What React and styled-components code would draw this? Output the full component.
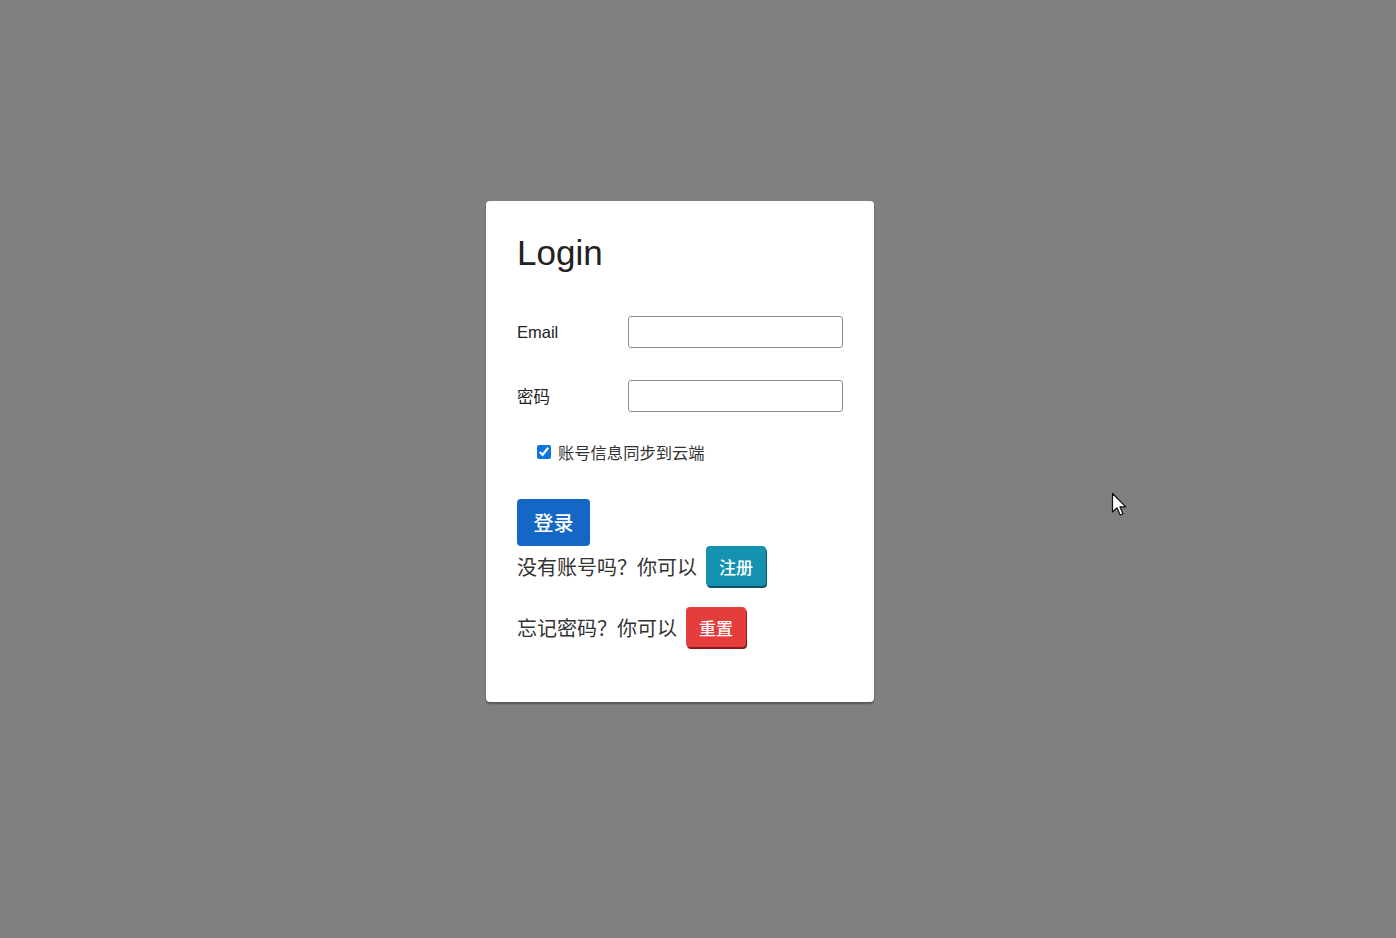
import React from "react";
import styled, { createGlobalStyle } from "styled-components";

const GlobalStyle = createGlobalStyle`
  html, body {
    margin: 0;
    padding: 0;
    background: #808080;
  }
  body {
    font-family: "Liberation Sans", "Noto Sans CJK SC", sans-serif;
    color: #212529;
  }
`;

const Page = styled.div`
  position: relative;
  width: 1396px;
  height: 938px;
  background: #808080;
  display: flex;
  justify-content: center;
  align-items: flex-start;
  padding-top: 201px;
  box-sizing: border-box;
`;

const Card = styled.div`
  width: 388px;
  height: 501px;
  margin-left: -36px;
  box-sizing: border-box;
  background: #fff;
  border-radius: 4px;
  box-shadow: 0 2px 2px rgba(0, 0, 0, 0.35);
  padding: 32px 31px 0 31px;
  display: flex;
  flex-direction: column;
`;

const Title = styled.h1`
  margin: 0 0 43px 0;
  font-size: 35px;
  font-weight: 400;
  line-height: 40px;
  color: #222;
`;

const FieldRow = styled.div`
  display: flex;
  align-items: center;
  height: 32px;
  margin-bottom: 32px;
`;

const Label = styled.label`
  width: 111px;
  font-size: 16.5px;
  color: #222;
`;

const Input = styled.input`
  width: 215px;
  height: 32px;
  box-sizing: border-box;
  border: 1px solid #8f8f8f;
  border-radius: 3px;
  padding: 0 6px;
  font-size: 15px;
  outline: none;
`;

const CheckRow = styled.label`
  display: flex;
  align-items: center;
  margin: -3px 0 0 20px;
  height: 22px;
  font-size: 16.3px;
  color: #333;

  input {
    width: 14px;
    height: 14px;
    margin: 0 7px 0 0;
    accent-color: #0b74de;
  }
`;

const Btn = styled.button`
  border: none;
  border-radius: 4px;
  color: #fff;
  font-family: "Noto Sans CJK SC", sans-serif;
  cursor: pointer;
  padding: 0;
  background: ${(p) => p.$bg};
  width: ${(p) => p.$w}px;
  height: ${(p) => p.$h}px;
  font-size: ${(p) => p.$fs}px;
  font-weight: ${(p) => p.$fw || 400};
  box-shadow: ${(p) => (p.$shadow ? `1px 2px 0 ${p.$shadow}` : "none")};
`;

const LoginBtn = styled(Btn)`
  margin-top: 36px;
  align-self: flex-start;
`;

const LinkRow = styled.div`
  display: flex;
  align-items: center;
  font-size: 20px;
  color: #333;
  margin-top: ${(p) => p.$top}px;
  gap: 9px;
  font-family: "Noto Sans CJK SC", sans-serif;
`;

const Pointer = styled.svg`
  position: absolute;
  left: 1111px;
  top: 492px;
`;

export default function App() {
  return (
    <>
      <GlobalStyle />
      <Page>
        <Card>
          <Title>Login</Title>
          <FieldRow>
            <Label>Email</Label>
            <Input type="text" />
          </FieldRow>
          <FieldRow>
            <Label>密码</Label>
            <Input type="password" />
          </FieldRow>
          <CheckRow>
            <input type="checkbox" defaultChecked />
            账号信息同步到云端
          </CheckRow>
          <LoginBtn $bg="#1467c4" $w={73} $h={47} $fs={20} $fw={500}>
            登录
          </LoginBtn>
          <LinkRow $top={0}>
            没有账号吗？你可以
            <Btn $bg="#1692b1" $w={60} $h={40} $fs={17} $fw={500} $shadow="#0c5567">
              注册
            </Btn>
          </LinkRow>
          <LinkRow $top={21}>
            忘记密码？你可以
            <Btn $bg="#e53c3c" $w={60} $h={40} $fs={17} $fw={500} $shadow="#8e1b1b">
              重置
            </Btn>
          </LinkRow>
        </Card>
        <Pointer width="18" height="26" viewBox="0 0 18 26">
          <path
            d="M1.5 1.5 L1.5 20 L6 15.8 L9.2 23 L12 21.8 L8.9 14.8 L14.8 14.8 Z"
            fill="#fff"
            stroke="#111"
            strokeWidth="1.2"
            strokeLinejoin="round"
          />
        </Pointer>
      </Page>
    </>
  );
}
